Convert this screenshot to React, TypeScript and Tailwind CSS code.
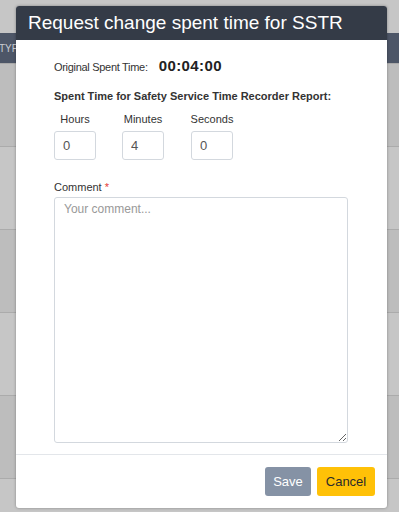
import React from "react";

const rows = [
  "bg-[#bdbdbd]",
  "bg-[#c6c6c6]",
  "bg-[#bdbdbd]",
  "bg-[#c6c6c6]",
  "bg-[#bdbdbd]",
  "bg-[#c6c6c6]",
];

const TimeField: React.FC<{ label: string; value: string }> = ({ label, value }) => (
  <div className="flex flex-col items-center w-[42px]">
    <span className="text-[11px] leading-[14px] text-[#333]">{label}</span>
    <input
      type="text"
      defaultValue={value}
      className="mt-[5px] w-[42px] h-[29px] px-[8px] border border-[#d3d8de] rounded-[3px] text-[13px] text-[#555] outline-none"
    />
  </div>
);

const App: React.FC = () => {
  return (
    <div
      className="relative w-[399px] h-[512px] overflow-hidden bg-[#c6c6c6]"
      style={{ fontFamily: '"Liberation Sans", Arial, sans-serif' }}
    >
      {/* page behind the overlay */}
      <div className="h-[33px]" />
      <div className="h-[31px] bg-[#4d5667] flex items-center text-[10px] text-[#c9ccd2] border-b border-[#a9a9a9]">
        <span className="-ml-[1px]">TYP</span>
      </div>
      {rows.map((c, i) => (
        <div key={i} className={`${c} h-[83px] border-b border-[#ababab]`} />
      ))}

      {/* modal */}
      <div className="absolute left-[16px] top-[6px] w-[371px] h-[502px] bg-white rounded-[3px] shadow-[0_0_3px_rgba(0,0,0,0.35)] flex flex-col overflow-hidden">
        <div className="h-[34px] shrink-0 bg-[#343b47] px-[12px] flex items-center text-white text-[19px]">
          Request change spent time for SSTR
        </div>

        <div className="flex-1 pl-[38px] pr-[39px] pt-[15px]">
          <div className="flex items-baseline h-[16px]">
            <span className="text-[11px] text-[#333] tracking-[-0.3px]">Original Spent Time:</span>
            <span className="ml-[11px] text-[15px] font-bold text-[#222] tracking-[0.4px]">00:04:00</span>
          </div>

          <div className="mt-[18px] text-[11px] font-bold text-[#333] leading-[14px]">
            Spent Time for Safety Service Time Recorder Report:
          </div>

          <div className="mt-[9px] flex">
            <TimeField label="Hours" value="0" />
            <div className="ml-[26px]">
              <TimeField label="Minutes" value="4" />
            </div>
            <div className="ml-[27px]">
              <TimeField label="Seconds" value="0" />
            </div>
          </div>

          <div className="mt-[20px] text-[11px] leading-[14px] text-[#333]">
            Comment <span className="text-[#e53935]">*</span>
          </div>
          <textarea
            placeholder="Your comment..."
            className="mt-[3px] block w-full h-[246px] border border-[#d3d8de] rounded-[3px] px-[9px] py-[2px] text-[12px] text-[#555] placeholder:text-[#999] outline-none"
          />
        </div>

        <div className="h-[54px] shrink-0 border-t border-[#e3e6ea] flex items-center justify-end gap-[6px] pr-[12px]">
          <button className="w-[46px] h-[29px] rounded-[3px] bg-[#8592a5] text-white text-[13px]">
            Save
          </button>
          <button className="w-[58px] h-[29px] rounded-[3px] bg-[#ffc107] text-[#2b2b2b] text-[13px]">
            Cancel
          </button>
        </div>
      </div>
    </div>
  );
};

export default App;
